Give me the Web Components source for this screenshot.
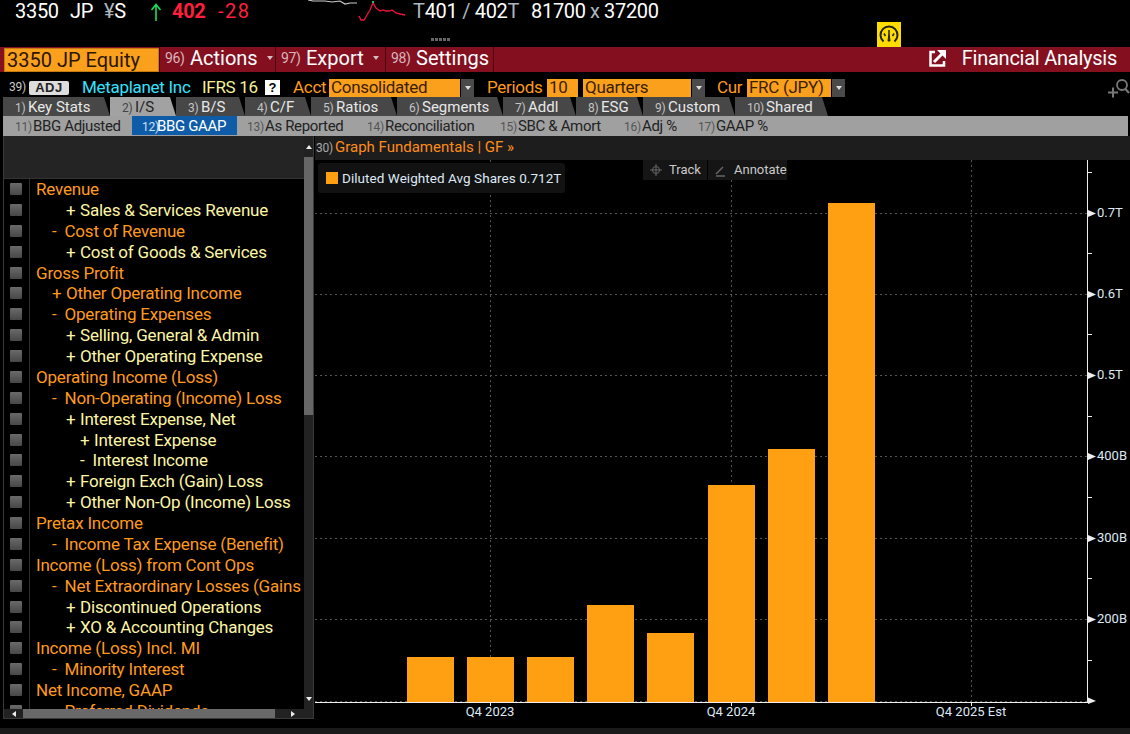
<!DOCTYPE html>
<html>
<head>
<meta charset="utf-8">
<style>
html,body{margin:0;background:#000;height:100%;overflow:hidden}
body{font-family:Roboto,"Liberation Sans",Arial,sans-serif;width:1130px;height:734px}
</style>
</head>
<body>
<quote-bar></quote-bar>
<menu-bar></menu-bar>
<filter-row></filter-row>
<tab-row></tab-row>
<sub-tabs></sub-tabs>
<main-area></main-area>
<foot-bar></foot-bar>
<script>
class QuoteBar extends HTMLElement {
    constructor(){
        super();
        this.attachShadow({mode:"open"});
        this.shadowRoot.innerHTML = `
        <style>
        :host{display:flex;height:47px;box-sizing:border-box;position:relative;font-size:20px;letter-spacing:-.3px;color:#fff;padding:0 0 0 15px;align-items:flex-start;line-height:22px;background:#000}
        span{white-space:pre;display:block;flex:none}
        span span{display:inline}
        .dim{color:#aeb6bd}
        .big{color:#ff1f3d;font-weight:bold}
        .red{color:#ff1f3d;letter-spacing:1.500px}
        svg{display:block;flex:none}
        .grip{position:absolute;left:431px;top:38px;width:20px;height:3px;background:repeating-linear-gradient(90deg,#666 0 3px,transparent 3px 4px)}
        .gauge{position:absolute;left:877px;top:22px;width:24px;height:25px;background:#ffdd00}
        </style>
        <span style="width:55px">3350</span>
        <span style="width:34px">JP</span>
        <span style="width:45px"><span class="dim">¥</span>S</span>
        <svg width="14" height="20" viewBox="0 0 14 20" style="margin-top:2px"><path d="M7 19V3M2.500 8 7 2.500 11.500 8" fill="none" stroke="#18e05a" stroke-width="1.600"/></svg>
        <span class="big" style="margin-left:9px;width:46px">402</span>
        <span class="red" style="width:90px">-28</span>
        <svg width="100" height="24" viewBox="308 0 100 24"><path d="M308 0 313 1 325 1 332 2 340 1 345 4 350 3 357 3" fill="none" stroke="#ccc" stroke-width="1.200"/><path d="M359 16 361 20 364 20 367 15 370 10 373 3 376 8 380 11 383 10 386 11 389 11 392 10 396 13 400 14 405 15" fill="none" stroke="#f0143a" stroke-width="1.300"/><rect x="372" y="1" width="2" height="2" fill="#1ec05a"/></svg>
        <span style="margin-left:5px;width:118px"><span class="dim">T</span>401 <span class="dim">/</span> 402<span class="dim">T</span></span>
        <span style="width:59px">81700</span>
        <span class="dim" style="width:14px">x</span>
        <span>37200</span>
        <div class="grip"></div>
        <div class="gauge"><svg width="24" height="25" viewBox="0 0 24 25"><path d="M6.500 19.500A8.500 8.500 0 1 1 17.500 19.500" fill="none" stroke="#222" stroke-width="2"/><path d="M7 11.500 8.500 14M17 11.500 15.500 14M12 8V11" fill="none" stroke="#222" stroke-width="1.500"/><path d="M11 19 12 11 13 19Z" fill="#222" stroke="#222"/></svg></div>
        `;
    }
}
class MenuBar extends HTMLElement {
    constructor(){
        super();
        this.attachShadow({mode:"open"});
        this.shadowRoot.innerHTML = `
        <style>
        :host{display:flex;height:25px;background:#840f1f;color:#fff;font-size:20px;line-height:24px;align-items:stretch;padding-left:4px}
        .sec{background:#fba01c;color:#2a1500;width:155px;box-sizing:border-box;border:1px solid #c77a10;padding-left:2px;height:24px;line-height:22px;margin-top:1px;white-space:nowrap}
        .btn{box-sizing:border-box;border-left:1px solid #4a0610;padding:0 0 3px 5px;white-space:nowrap;display:flex;align-items:center}
        i{font-style:normal;color:#d8b6bc;font-size:14px;letter-spacing:-.4px;width:25px;flex:none}
        b{font-weight:normal;border-top:4px solid #d5c0c4;border-left:3px solid transparent;border-right:3px solid transparent;margin-left:9px}
        .end{border-left:1px solid #4a0610}
        .right{margin-left:auto;display:flex;align-items:center;padding:0 13px 3px 0;gap:15px;letter-spacing:-.25px}
        </style>
        <div class="sec">3350 JP Equity</div>
        <div class="btn" style="width:116px"><i>96)</i>Actions<b></b></div>
        <div class="btn" style="width:110px"><i>97)</i>Export<b></b></div>
        <div class="btn" style="width:108px"><i>98)</i>Settings</div>
        <div class="end"></div>
        <div class="right"><svg width="18" height="18" viewBox="0 0 18 18"><path d="M6 3H1.500V16.500H15V12" fill="none" stroke="#fff" stroke-width="2.500"/><path d="M5 13 14 4" stroke="#fff" stroke-width="3"/><path d="M8 1H17V10Z" fill="#fff"/></svg><span>Financial Analysis</span></div>
        `;
    }
}
class FilterRow extends HTMLElement {
    constructor(){
        super();
        this.attachShadow({mode:"open"});
        this.shadowRoot.innerHTML = `
        <style>
        :host{display:flex;height:19px;margin-top:6px;align-items:center;font-size:17px;letter-spacing:-.3px;color:#ff9a1a;position:relative;white-space:nowrap}
        span{flex:none;line-height:16px}
        .l{padding-bottom:2px}
        .n{color:#c8c8c8;font-size:12px;letter-spacing:-.3px;margin-left:9px;width:20px}
        .adj{background:#ddd;color:#222;font-family:"Liberation Sans",sans-serif;font-weight:bold;font-size:13px;letter-spacing:.5px;width:40px;height:14px;line-height:14px;text-align:center;border-radius:2px}
        .q{background:#fff;color:#000;font-family:"Liberation Sans",sans-serif;font-weight:bold;font-size:13px;letter-spacing:0;width:15px;height:15px;line-height:15px;text-align:center}
        .box{background:#fba01c;color:#3a2000;height:18px;box-sizing:border-box;padding-left:2px}
        .dd{background:#4a4a4a;width:13px;height:18px;display:flex;align-items:center;justify-content:center;margin-left:1px}
        .dd::after{content:"";border-top:4px solid #ddd;border-left:3px solid transparent;border-right:3px solid transparent}
        .plus{position:absolute;right:0;top:1px}
        </style>
        <span class="n l">39)</span><span class="adj">ADJ</span>
        <span class="l" style="color:#35e3ff;margin-left:13px;width:120px">Metaplanet Inc</span>
        <span class="l" style="color:#f5f29a;width:63px">IFRS 16</span><span class="q">?</span>
        <span class="l" style="margin-left:13px;width:36px">Acct</span>
        <span class="box" style="width:131px">Consolidated</span><span class="dd"></span>
        <span class="l" style="margin-left:13px;width:60px">Periods</span>
        <span class="box" style="width:31px">10</span>
        <span class="box" style="margin-left:5px;width:108px">Quarters</span><span class="dd"></span>
        <span class="l" style="margin-left:12px;width:30px">Cur</span>
        <span class="box" style="width:84px">FRC (JPY)</span><span class="dd"></span>
        <svg class="plus" width="23" height="20" viewBox="0 0 23 20"><circle cx="15" cy="6" r="5" fill="none" stroke="#777" stroke-width="1.800"/><path d="M18.500 10 22 14" stroke="#777" stroke-width="2"/><path d="M1 13.500H11M6 8.500V18.500" stroke="#777" stroke-width="2"/></svg>
        `;
    }
}
class TabRow extends HTMLElement {
    constructor(){
        super();
        this.attachShadow({mode:"open"});
        const tabs = [["1)","Key Stats",107],["2)","I/S",66],["3)","B/S",69],["4)","C/F",66],["5)","Ratios",86],["6)","Segments",106],["7)","Addl",73],["8)","ESG",67],["9)","Custom",92],["10)","Shared",93]];
        this.shadowRoot.innerHTML = `
        <style>
        :host{display:flex;height:19px;padding-left:3px;font-size:15px;line-height:20px;color:#e8e8e8;white-space:nowrap}
        .t{background:#474747;padding-left:12px;box-sizing:border-box;clip-path:polygon(0 0,calc(100% - 6px) 0,100% 100%,0 100%)}
        .t.on{background:#a2a2a2;color:#222}
        i{font-style:normal;font-size:12px;letter-spacing:-.3px;color:#c4c4c4;display:inline-block;width:13px}
        i.w{width:19px}
        .on i{color:#444}
        </style>
        ${tabs.map((t,k)=>`<div class="t${k==1?" on":""}" style="width:${t[2]}px"><i${t[0].length>2?' class="w"':""}>${t[0]}</i>${t[1]}</div>`).join("")}
        `;
    }
}
class SubTabs extends HTMLElement {
    constructor(){
        super();
        this.attachShadow({mode:"open"});
        const tabs = [["11)","BBG Adjusted",127],["12)","BBG GAAP",105],["13)","As Reported",120],["14)","Reconciliation",133],["15)","SBC & Amort",124],["16)","Adj %",74],["17)","GAAP %",80]];
        this.shadowRoot.innerHTML = `
        <style>
        :host{display:flex;height:20px;margin-left:3px;padding-left:2px;margin-right:2px;background:#a0a0a0;font-size:15px;letter-spacing:-.35px;line-height:21px;color:#222;white-space:nowrap;box-sizing:border-box}
        .t{padding-left:10px;box-sizing:border-box;height:19px}
        .t.on{background:#0e5ca8;color:#fff}
        i{font-style:normal;font-size:12px;letter-spacing:-.3px;color:#555;display:inline-block;width:18px}
        .on i{color:#cfe2f5;width:15px}
        </style>
        ${tabs.map((t,k)=>`<div class="t${k==1?" on":""}" style="width:${t[2]}px"><i>${t[0]}</i>${t[1].replace("&","&amp;")}</div>`).join("")}
        `;
    }
}
class TreeList extends HTMLElement {
    constructor(){
        super();
        this.attachShadow({mode:"open"});
        const rows = [
            [0,"o","Revenue"],[2,"y","+ Sales & Services Revenue"],[1,"o","- Cost of Revenue"],[2,"y","+ Cost of Goods & Services"],
            [0,"o","Gross Profit"],[1,"o","+ Other Operating Income"],[1,"o","- Operating Expenses"],[2,"y","+ Selling, General & Admin"],
            [2,"y","+ Other Operating Expense"],[0,"o","Operating Income (Loss)"],[1,"o","- Non-Operating (Income) Loss"],[2,"y","+ Interest Expense, Net"],
            [3,"y","+ Interest Expense"],[3,"y","- Interest Income"],[2,"y","+ Foreign Exch (Gain) Loss"],[2,"y","+ Other Non-Op (Income) Loss"],
            [0,"o","Pretax Income"],[1,"o","- Income Tax Expense (Benefit)"],[0,"o","Income (Loss) from Cont Ops"],[1,"o","- Net Extraordinary Losses (Gains"],
            [2,"y","+ Discontinued Operations"],[2,"y","+ XO & Accounting Changes"],[0,"o","Income (Loss) Incl. MI"],[1,"o","- Minority Interest"],
            [0,"o","Net Income, GAAP"],[1,"o","- Preferred Dividends"]];
        const label = t => {
            const m = t.match(/^([+-]) (.*)$/);
            const s = (m ? m[2] : t).replace(/&/g,"&amp;");
            return m ? `<em style="width:${m[1]=="+"?14:12.500}px">${m[1]}</em>${s}` : s;
        };
        this.shadowRoot.innerHTML = `
        <style>
        :host{display:block;width:311px;height:583px;margin-left:3px;position:relative;background:#000;box-sizing:border-box;border:1px solid #3a3a3a;border-top:0;overflow:hidden;flex:none}
        .head{height:43px;background:#242424;border-bottom:1px solid #333;margin-right:9px;box-sizing:border-box}
        .rows{position:absolute;left:0;top:43px;right:9px;bottom:9px;overflow:hidden;font-size:17px;letter-spacing:-.2px}
        .rows::before{content:"";position:absolute;left:25px;top:0;bottom:0;width:1px;background:#2e2e2e}
        .r{height:20.880px;line-height:20.880px;position:relative;white-space:nowrap;color:#ff9a1a}
        .r.y{color:#fdf6a6}
        .r::before{content:"";position:absolute;left:6px;top:4px;width:12px;height:12px;background:linear-gradient(#6a6a6a,#474747);border-radius:1px}
        .r span{position:absolute}
        em{font-style:normal;display:inline-block}
        .vs{position:absolute;right:0;top:0;bottom:9px;width:9px;background:#222}
        .vs div{position:absolute;left:0;right:0;top:21px;height:258px;background:#666}
        .hs{position:absolute;left:0;right:0;bottom:0;height:9px;background:#222}
        .hs div{position:absolute;left:19px;top:0;width:252px;height:9px;background:#696969}
        .ar{position:absolute;width:0;height:0;border:3px solid transparent}
        </style>
        <div class="head"></div>
        <div class="rows">${rows.map(r=>`<div class="r ${r[1]}"><span style="left:${[32,48,62,76][r[0]]}px">${label(r[2])}</span></div>`).join("")}</div>
        <div class="vs"><div></div></div>
        <div class="hs"><div></div></div>
        <div class="ar" style="right:1px;top:9px;border-bottom:4px solid #eee;border-top:0"></div>
        <div class="ar" style="right:1px;bottom:17px;border-top:4px solid #eee;border-bottom:0"></div>
        <div class="ar" style="left:8px;bottom:1px;border-right:4px solid #eee;border-left:0"></div>
        <div class="ar" style="right:18px;bottom:1px;border-left:4px solid #eee;border-right:0"></div>
        `;
    }
}
class ShareChart extends HTMLElement {
    constructor(){
        super();
        this.attachShadow({mode:"open"});
        // bars: x, top in page coords; baseline is y=702
        const bars = [[407,657],[467,657],[527,657],[587,605],[647,633],[708,485],[768,449],[828,203]];
        const ax = [[213,"0.7T"],[294,"0.6T"],[375,"0.5T"],[456,"400B"],[538,"300B"],[619,"200B"]];
        const oy = 136;
        this.shadowRoot.innerHTML = `
        <style>
        :host{display:block;flex:1;position:relative;height:592px;background:#000;overflow:hidden;color:#dfe9f5;font-size:13px}
        .head{height:24px;background:#1d1d1d;color:#ff8c1a;font-size:15px;line-height:22px;padding-left:1px;white-space:nowrap}
        .head i{font-style:normal;font-size:12px;letter-spacing:-.3px;color:#aaa;display:inline-block;width:19px}
        svg{position:absolute;left:0;top:0}
        .legend{position:absolute;left:3px;top:27px;width:247px;height:30px;background:#121212;border-radius:3px;line-height:31px;font-size:13.500px;letter-spacing:.05px;padding-left:24px;box-sizing:border-box;white-space:nowrap}
        .legend::before{content:"";position:absolute;left:8px;top:9px;width:12px;height:12px;background:#ff9f12}
        .pill{position:absolute;top:24px;height:20px;line-height:19px;background:#151515;white-space:nowrap;color:#c9c9c9;box-sizing:border-box}
        .tl{position:absolute;white-space:nowrap}
        .xl{position:absolute;top:568px;transform:translateX(-50%);white-space:nowrap}
        </style>
        <div class="head"><i>30)</i>Graph Fundamentals | GF »</div>
        <svg width="815" height="592" viewBox="315 136 815 592">
            ${ax.map(a=>`<path d="M315 ${a[0]}.5H1088" stroke="#555" stroke-dasharray="2 3"/>`).join("")}
            <path d="M315 701.500H1088" stroke="#555" stroke-dasharray="2 3"/>
            ${[490,731,971].map(x=>`<path d="M${x}.5 160V702" stroke="#555" stroke-dasharray="2 3"/>`).join("")}
            ${bars.map(b=>`<rect x="${b[0]}" y="${b[1]}" width="47" height="${702-b[1]}" fill="#ff9f12"/>`).join("")}
            <path d="M315 702.500H1088" stroke="#eee"/>
            <path d="M1087.500 160V702" stroke="#eee"/>
            ${[172,253,334,416,497,578,660].map(y=>`<path d="M1088 ${y}.5H1092" stroke="#eee"/>`).join("")}
            ${ax.map(a=>`<path d="M1088 ${a[0]-3}V${a[0]+4}L1096 ${a[0]+.5}Z" fill="#eee"/>`).join("")}
            <path d="M1088 697.500V704L1096 701Z" fill="#eee"/>
            ${[490,731,971].map(x=>`<path d="M${x}.5 703V706" stroke="#eee"/>`).join("")}
        </svg>
        <div class="legend">Diluted Weighted Avg Shares 0.712T</div>
        <div class="pill" style="left:328px;width:64px;padding-left:26px"><svg width="14" height="14" viewBox="0 0 14 14" style="left:6px;top:3px"><circle cx="7" cy="7" r="3.500" fill="none" stroke="#666"/><path d="M7 1V13M1 7H13" stroke="#666"/></svg>Track</div>
        <div class="pill" style="left:393px;width:79px;padding-left:26px"><svg width="12" height="12" viewBox="0 0 12 12" style="left:7px;top:5px"><path d="M1 9 8 2M1 11H10" stroke="#666" stroke-width="1.500"/></svg>Annotate</div>
        ${ax.map(a=>`<div class="tl" style="left:782px;top:${a[0]-oy-8}px">${a[1]}</div>`).join("")}
        ${[[490,"Q4 2023"],[731,"Q4 2024"],[971,"Q4 2025 Est"]].map(l=>`<div class="xl" style="left:${l[0]-315}px">${l[1]}</div>`).join("")}
        `;
    }
}
class MainArea extends HTMLElement {
    constructor(){
        super();
        this.attachShadow({mode:"open"});
        this.shadowRoot.innerHTML = `
        <style>
        :host{display:flex;height:592px;gap:1px;align-items:flex-start}
        </style>
        <tree-list></tree-list>
        <share-chart></share-chart>
        `;
    }
}
class FootBar extends HTMLElement {
    constructor(){
        super();
        this.attachShadow({mode:"open"});
        this.shadowRoot.innerHTML = `<style>:host{display:block;height:6px;background:#1a1a1a}</style>`;
    }
}
customElements.define("quote-bar",QuoteBar);
customElements.define("menu-bar",MenuBar);
customElements.define("filter-row",FilterRow);
customElements.define("tab-row",TabRow);
customElements.define("sub-tabs",SubTabs);
customElements.define("tree-list",TreeList);
customElements.define("share-chart",ShareChart);
customElements.define("main-area",MainArea);
customElements.define("foot-bar",FootBar);
</script>
</body>
</html>
